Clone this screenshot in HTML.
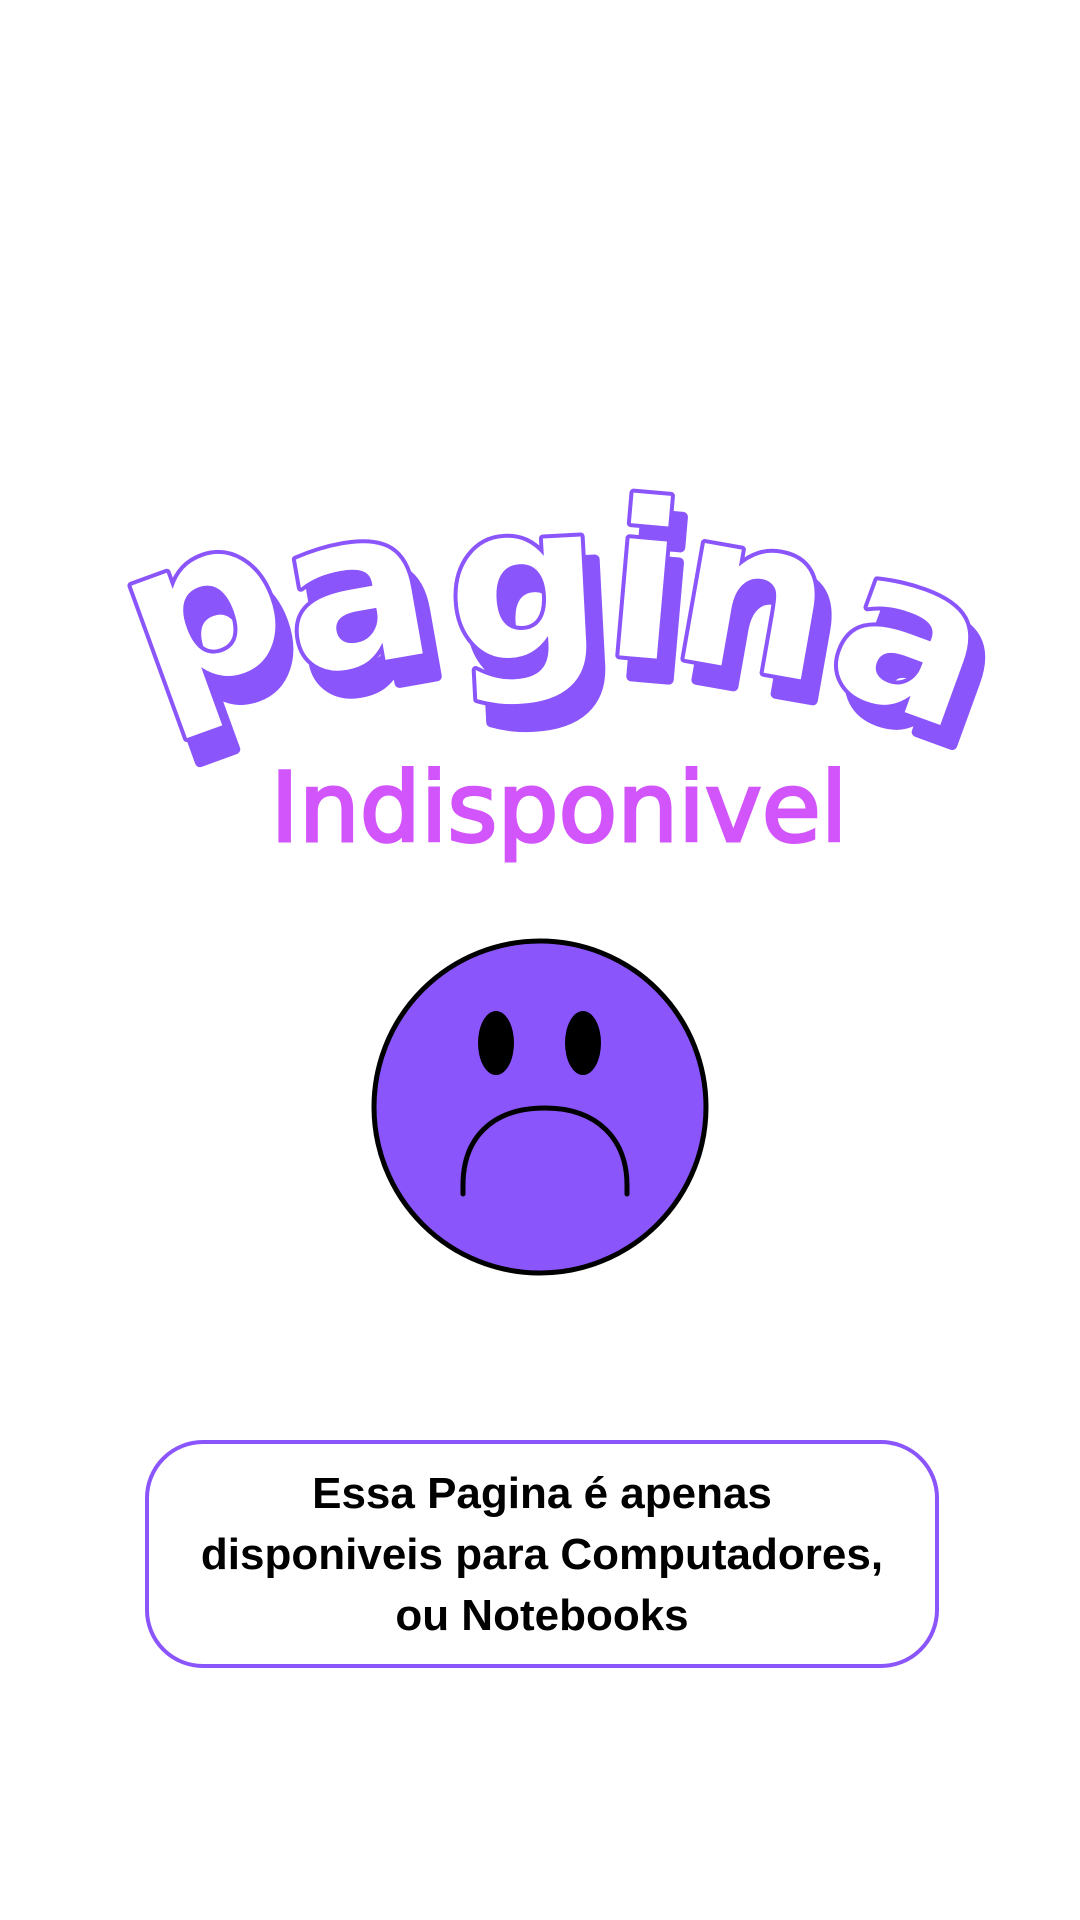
<!DOCTYPE html>
<html><head><meta charset="utf-8"><style>
html,body{margin:0;padding:0;background:#fff;width:1080px;height:1920px;overflow:hidden}
.box{position:absolute;left:145px;top:1440px;width:786px;height:220px;border:4px solid #8b55fc;border-radius:58px;box-sizing:content-box;display:flex;align-items:center;justify-content:center;text-align:center;font-family:"Liberation Sans",sans-serif;font-weight:bold;font-size:44px;line-height:61px;color:#000}
</style></head><body>
<svg width="1080" height="1920" style="position:absolute;left:0;top:0">
<g font-family="DejaVu Sans, sans-serif" font-weight="bold" font-size="215" text-anchor="middle">
 <g fill="#8b55fc" stroke="#8b55fc" stroke-width="10" stroke-linejoin="round">
  <text transform="translate(240,700) rotate(-20)">p</text>
  <text transform="translate(382,686) rotate(-10)">a</text>
  <text transform="translate(542,680) rotate(-3)">g</text>
  <text transform="translate(650,678) rotate(5)">i</text>
  <text transform="translate(754,690) rotate(10)">n</text>
  <text transform="translate(900,726) rotate(20)">a</text>
 </g>
 <g fill="#fff" stroke="#8b55fc" stroke-width="8" paint-order="stroke" stroke-linejoin="round">
  <text transform="translate(227,676) rotate(-20)">p</text>
  <text transform="translate(368,663) rotate(-10)">a</text>
  <text transform="translate(528,657) rotate(-3)">g</text>
  <text transform="translate(638,657) rotate(5)">i</text>
  <text transform="translate(742,669) rotate(10)">n</text>
  <text transform="translate(888,706) rotate(20)">a</text>
 </g>
</g>
<text x="559" y="841" text-anchor="middle" font-family="DejaVu Sans, sans-serif" font-size="96" fill="#d255fb" stroke="#d255fb" stroke-width="3" textLength="577" lengthAdjust="spacingAndGlyphs">Indisponivel</text>
<circle cx="540" cy="1107" r="166" fill="#8b55fc" stroke="#000" stroke-width="5"/>
<ellipse cx="496" cy="1043" rx="18" ry="32" fill="#000"/>
<ellipse cx="583" cy="1043" rx="18" ry="32" fill="#000"/>
<path d="M463 1194 L463 1185 C463 1140 490 1108 545 1108 C598 1108 627 1140 627 1185 L627 1194" fill="none" stroke="#000" stroke-width="5" stroke-linecap="round"/>
</svg>
<div class="box"><div>Essa Pagina é apenas<br>disponiveis para Computadores,<br>ou Notebooks</div></div>
</body></html>
